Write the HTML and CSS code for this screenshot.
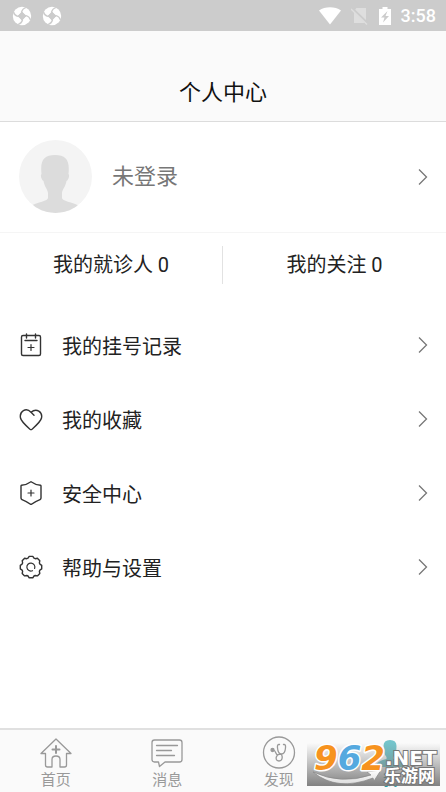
FILE: index.html
```html
<!DOCTYPE html>
<html lang="zh-CN">
<head>
<meta charset="utf-8">
<meta name="viewport" content="width=device-width, initial-scale=1">
<title>个人中心</title>
<link rel="stylesheet" href="styles.css">
</head>
<body>
<svg class="defs" aria-hidden="true">
  <symbol id="chevron" viewBox="0 0 10 18"><path d="M1 1.500 8.500 9 1 16.500"/></symbol>
  <symbol id="swirl" viewBox="0 0 20 20">
    <circle cx="10" cy="10" r="9.200" fill="#fff"/>
    <path d="M10 6 14 10 10 14 6 10z" fill="#ccc"/>
    <g fill="none" stroke="#ccc" stroke-width="1.300">
      <path d="M10.500 6 6 10.500Q2.500 9.500 1.500 6"/>
      <path d="M6 9.500 10.500 14Q9.500 17.500 6 18.500"/>
      <path d="M9.500 14 14 9.500Q17.500 10.500 18.500 14"/>
      <path d="M14 10.500 9.500 6Q10.500 2.500 14 1.500"/>
    </g>
  </symbol>
</svg>
<div class="app">
  <div class="status">
    <svg class="status-app"><use href="#swirl"/></svg>
    <svg class="status-app"><use href="#swirl"/></svg>
    <div class="status-right">
      <svg width="22" height="18" viewBox="0 0 22 18"><path d="M0 3.500C6-.8 16-.8 22 3.500L11 17.500z" fill="#fff"/></svg>
      <svg width="18" height="18" viewBox="0 0 18 18"><path d="M5.500 1H15v15H3V4z" fill="#dedede"/><path d="M1 1.500 17 17" stroke="#ccc" stroke-width="3"/><path d="M0 2 16 17.500" stroke="#dedede" stroke-width="1.400"/></svg>
      <svg width="12" height="18" viewBox="0 0 12 18"><path d="M3.500 0h5v2H12v16H0V2h3.500z" fill="#fff"/><path d="M8.500 4 2 10.500h3.500L4 15.500 10 9H6.500z" fill="#ccc"/></svg>
      <span class="clock">3:58</span>
    </div>
  </div>
  <header class="header"><h1>个人中心</h1></header>
  <main>
    <a class="profile" href="#login">
      <svg class="avatar" viewBox="0 0 73 73">
        <clipPath id="round"><circle cx="36.500" cy="36.500" r="36.500"/></clipPath>
        <g clip-path="url(#round)"><path fill="#f4f4f4" d="M0 0h73v73H0z"/>
        <path fill="#dcdcdc" d="M22.500 34C21 20 25 15 36 15s15 5 13.500 19c1.500 1 0 6-2 7-1 6-4 8-4.500 12v5c0 3 10 4 18 8v10H11V66c8-4 18-5 18-8v-5c-.5-4-3.500-6-4.500-12-2-1-3.500-6-2-7z"/></g>
      </svg>
      <span class="profile-name">未登录</span>
      <svg class="chevron"><use href="#chevron"/></svg>
    </a>
    <div class="stats">
      <a href="#patients">我的就诊人 0</a>
      <a href="#follows">我的关注 0</a>
    </div>
    <nav class="menu">
      <a href="#records">
        <svg class="menu-icon" viewBox="0 0 24 24"><rect x="2.500" y="2.500" width="19" height="20" rx="1.500"/><path d="M7.500 1v4M16.500 1v4M6 7.500h12"/><path class="thin" d="M12 11.500v6M9 14.500h6"/></svg>
        <span>我的挂号记录</span><svg class="chevron"><use href="#chevron"/></svg>
      </a>
      <a href="#favorites">
        <svg class="menu-icon" viewBox="0 0 24 24"><path d="M12 5.300C7-.2 .2 4.500 1.500 11 2.200 14.500 8 19.500 11 22.200q1 .8 2 0c3-2.700 8.800-7.700 9.500-11.200C23.800 5 17.500.5 12 5.300l3 3"/></svg>
        <span>我的收藏</span><svg class="chevron"><use href="#chevron"/></svg>
      </a>
      <a href="#security">
        <svg class="menu-icon" viewBox="0 0 24 24"><path d="M12 .7C9 2.800 6 4 2.500 4.300Q2 4.400 2 5v12Q2 18 3 18.700 7.500 20.500 12 23.500q4.500-3 9-4.800Q22 18 22 17V5q0-.6-.5-.7C18 4 15 2.800 12 .7z"/><path class="thin" d="M12 9v6M9 12h6"/></svg>
        <span>安全中心</span><svg class="chevron"><use href="#chevron"/></svg>
      </a>
      <a href="#settings">
        <svg class="menu-icon" viewBox="0 0 24 24"><path d="M9 3.200 10.200 1.400h3.600L15 3.200l1.200.5 2.200-.4 2.400 2.400-.4 2.200.5 1.200 1.800 1.200v3.600L20.900 15.100l-.5 1.200.4 2.200-2.400 2.400-2.200-.4-1.200.5-1.200 1.800h-3.600L9 21l-1.200-.5-2.200.4-2.400-2.400.4-2.200-.5-1.200-1.800-1.200v-3.600L3.100 9.100l.5-1.200-.4-2.200 2.400-2.400 2.200.4z"/><path class="thin" d="M13.500 15.700A4 4 0 1 1 15.600 13.500"/></svg>
        <span>帮助与设置</span><svg class="chevron"><use href="#chevron"/></svg>
      </a>
    </nav>
  </main>
  <nav class="tabs">
    <a href="#home">
      <svg class="tab-icon" viewBox="0 0 34 34"><path d="M17 3 2 17.500h4.500V29q0 2 2 2h4.500V23.500q0-3.500 4-3.500t4 3.500V31h4.500q2 0 2-2V17.500H32z"/><path class="bold" d="M17 10v7M13.500 13.500h7"/></svg>
      <span>首页</span>
    </a>
    <a href="#messages">
      <svg class="tab-icon" viewBox="0 0 34 34"><path d="M4.500 4h25Q32 4 32 6.500v17q0 2.500-2.500 2.500H15l-5.500 4.500-1-4.500h-4Q2 26 2 23.500v-17Q2 4 4.500 4zM6.500 9.500h21M6.500 14.500h15M6.500 19.500h18"/></svg>
      <span>消息</span>
    </a>
    <a href="#discover">
      <svg class="tab-icon" viewBox="0 0 34 34"><circle cx="17" cy="16.500" r="15.500"/><path d="M17.500 8.500Q15 8 15.500 12q.5 6 4 6t4-6q.5-4-2-3.500M19.500 18c1.500 4 .5 7-2.500 7s-4-3-1.500-6q1.500-1 4-1M15.500 19c-2-1-1.500-4-4-5"/><circle cx="10.500" cy="14" r="1.500" fill="#999"/></svg>
      <span>发现</span>
    </a>
    <a class="active" href="#me" aria-current="page">
      <svg class="tab-icon" viewBox="0 0 34 34"><path d="M10.500 10Q10.500 4 17 4t6.500 6q0 8-3 11v2q7 1 11 6v2h-29v-2q4-5 11-6v-2q-3-3-3-11z"/></svg>
      <span>我</span>
    </a>
  </nav>
  <svg class="watermark" viewBox="0 0 133 43" role="img" aria-label="962.NET 乐游网">
    <defs>
      <linearGradient id="shade" x2="0" y2="1"><stop offset="0" stop-color="#777" stop-opacity="0"/><stop offset="1" stop-color="#777" stop-opacity=".92"/></linearGradient>
      <linearGradient id="swoosh" x2="0" y2="1"><stop stop-color="#fff"/><stop offset="1" stop-color="#ddd"/></linearGradient>
    </defs>
    <path fill="url(#shade)" d="M0 0h133v43H0z"/>
    <path d="M6 29q28 13 58 3l-4-3 14-2-7 11-1-3Q30 49 6 29z" fill="url(#swoosh)" stroke="#888" stroke-width=".7"/>
    <text class="mark-number" x="7" y="27"><tspan fill="#f7931e">9</tspan><tspan fill="#55a9df">6</tspan><tspan fill="#f7931e">2</tspan></text>
    <text class="mark-net" x="78" y="22">.NET</text>
    <text class="mark-name" x="77" y="39">乐游网</text>
  </svg>
</div>
</body>
</html>
```
FILE: styles.css
```css
* { box-sizing: border-box; }

body {
  margin: 0;
  background: #fff;
  color: #222;
  font-family: Roboto, "Noto Sans CJK SC", sans-serif;
}

a { color: inherit; text-decoration: none; }
svg { flex: none; }
.defs { position: absolute; width: 0; height: 0; }

.app {
  position: relative;
  display: flex;
  flex-direction: column;
  min-height: 100vh;
}

.status {
  display: flex;
  align-items: center;
  gap: 10px;
  height: 31px;
  padding: 0 10px 0 12px;
  background: #ccc;
}
.status-app { width: 20px; height: 20px; }
.status-right {
  display: flex;
  align-items: center;
  gap: 10px;
  margin-left: auto;
}
.clock { color: #fff; font-size: 18px; font-weight: 500; line-height: 20px; }

.header {
  padding: 45px 16px 12px;
  background: #fafafa;
  border-bottom: 1px solid #dcdcdc;
  text-align: center;
}
.header h1 {
  margin: 0;
  color: #111;
  font-size: 22px;
  font-weight: 400;
  line-height: 33px;
}

main { flex: 1; }

.profile {
  display: flex;
  align-items: center;
  gap: 20px;
  padding: 18px 18px 19px 19px;
  border-bottom: 1px solid #f5f5f5;
  color: #777;
  font-size: 22px;
  line-height: 33px;
}
.avatar { width: 73px; height: 73px; }

.chevron {
  width: 10px;
  height: 18px;
  margin-left: auto;
  fill: none;
  stroke: #777;
  stroke-width: 1.3px;
}

.stats {
  display: grid;
  grid-template-columns: 1fr 1fr;
  padding: 13px 0 24px;
  font-size: 20px;
  line-height: 38px;
  text-align: center;
}
.stats a:first-child { border-right: 1px solid #e2e2e2; }

.menu a {
  display: flex;
  align-items: center;
  gap: 19px;
  height: 74px;
  padding: 0 18px 0 19px;
  font-size: 20px;
}
.menu-icon {
  width: 24px;
  height: 24px;
  fill: none;
  stroke: #333;
  stroke-width: 1.4px;
  stroke-linecap: round;
  stroke-linejoin: round;
}
.thin { stroke-width: 1.2px; }

.tabs {
  display: grid;
  grid-template-columns: repeat(4, 1fr);
  padding: 6px 0 2px;
  background: #fafafa;
  border-top: 2px solid #e0e0e0;
  color: #999;
  font-size: 15px;
  line-height: 20px;
}
.tabs a { display: flex; flex-direction: column; align-items: center; }
.tab-icon {
  width: 34px;
  height: 34px;
  fill: none;
  stroke: #999;
  stroke-width: 1.3px;
  stroke-linejoin: round;
  stroke-linecap: round;
}
.bold { stroke-width: 2px; }
.tabs .active { color: #279da5; }
.active .tab-icon { fill: #73c4cb; stroke: none; }

.watermark {
  position: absolute;
  right: 6px;
  bottom: 6px;
  width: 133px;
  height: 43px;
  overflow: visible;
  pointer-events: none;
}
.mark-number {
  font: italic 700 34px "DejaVu Sans", sans-serif;
  stroke: #fff;
  stroke-width: 3px;
  paint-order: stroke;
  stroke-linejoin: round;
}
.mark-net {
  font: 700 20px "DejaVu Sans", sans-serif;
  fill: #fff;
  stroke: #777;
  stroke-width: 2px;
  paint-order: stroke;
}
.mark-name {
  font: 700 17px "Noto Sans CJK SC", sans-serif;
  fill: #fff;
  stroke: #777;
  stroke-width: 2px;
  paint-order: stroke;
}
```
